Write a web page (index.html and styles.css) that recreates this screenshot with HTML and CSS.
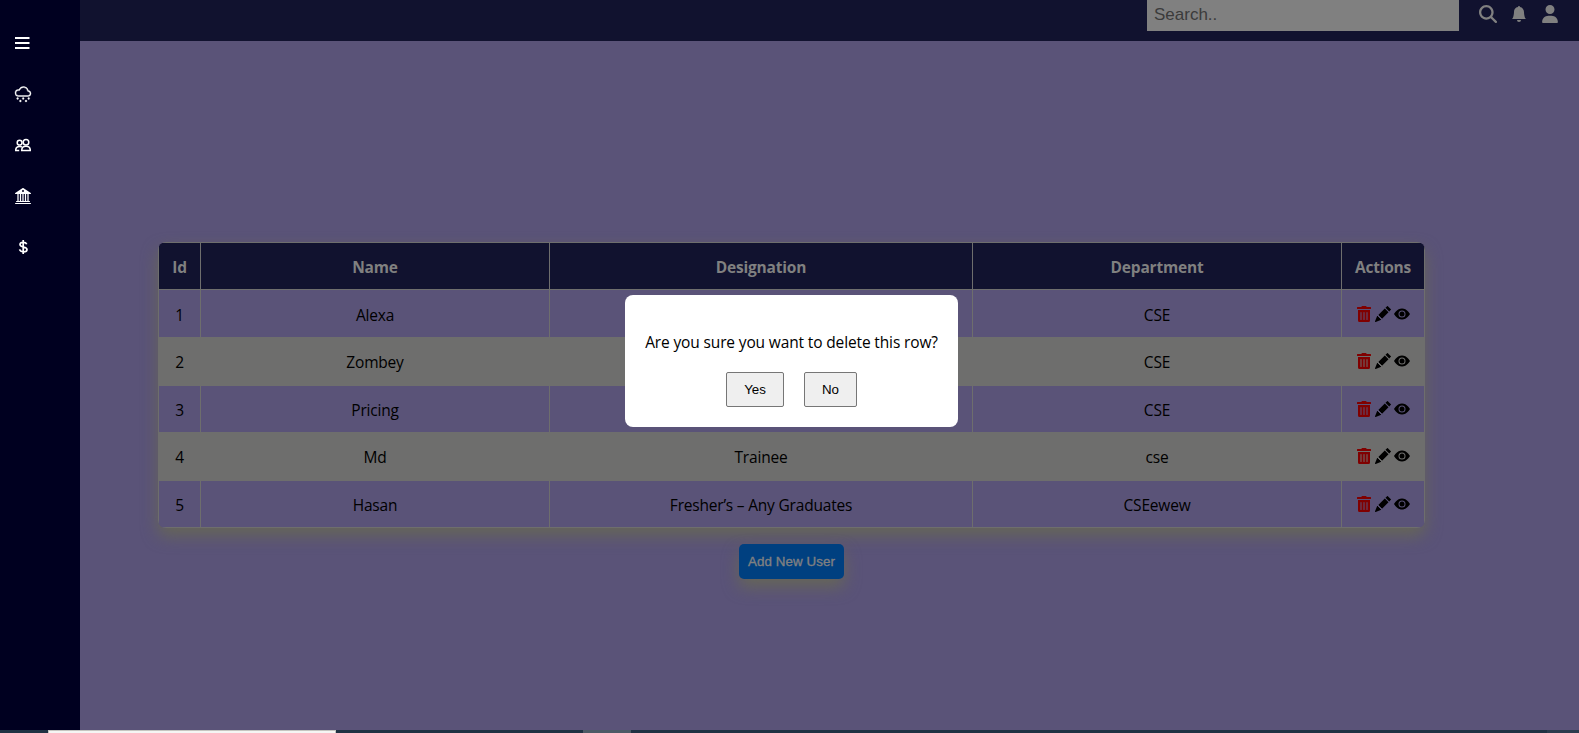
FILE: index.html
```html
<!DOCTYPE html>
<html lang="en">
<head>
<meta charset="utf-8">
<title>Users</title>
<link rel="stylesheet" href="styles.css">
</head>
<body>
<svg class="defs" xmlns="http://www.w3.org/2000/svg">
  <symbol id="trash" viewBox="0 0 448 512"><path d="M32 464a48 48 0 0 0 48 48h288a48 48 0 0 0 48-48V128H32zm272-256a16 16 0 0 1 32 0v224a16 16 0 0 1-32 0zm-96 0a16 16 0 0 1 32 0v224a16 16 0 0 1-32 0zm-96 0a16 16 0 0 1 32 0v224a16 16 0 0 1-32 0zM432 32H312l-9.4-18.7A24 24 0 0 0 281.1 0H166.8a23.72 23.72 0 0 0-21.4 13.3L136 32H16A16 16 0 0 0 0 48v32a16 16 0 0 0 16 16h416a16 16 0 0 0 16-16V48a16 16 0 0 0-16-16z"/></symbol>
  <symbol id="pencil" viewBox="0 0 16 16"><path d="M12.854.146a.5.5 0 0 0-.707 0L10.5 1.793 14.207 5.5l1.647-1.646a.5.5 0 0 0 0-.708l-3-3zm.646 6.061L9.793 2.5 3.293 9H3.5a.5.5 0 0 1 .5.5v.5h.5a.5.5 0 0 1 .5.5v.5h.5a.5.5 0 0 1 .5.5v.5h.5a.5.5 0 0 1 .5.5v.207l6.5-6.5zm-7.468 7.468A.5.5 0 0 1 6 13.5V13h-.5a.5.5 0 0 1-.5-.5V12h-.5a.5.5 0 0 1-.5-.5V11h-.5a.5.5 0 0 1-.5-.5V10h-.5a.499.499 0 0 1-.175-.032l-.179.178a.5.5 0 0 0-.11.168l-2 5a.5.5 0 0 0 .65.65l5-2a.5.5 0 0 0 .168-.11l.178-.178z"/></symbol>
  <symbol id="eye" viewBox="0 0 16 16"><path d="M10.5 8a2.5 2.5 0 1 1-5 0 2.5 2.5 0 0 1 5 0z"/><path d="M0 8s3-5.5 8-5.5S16 8 16 8s-3 5.5-8 5.5S0 8 0 8zm8 3.5a3.5 3.5 0 1 0 0-7 3.5 3.5 0 0 0 0 7z"/></symbol>
</svg>
<div class="app">
  <aside class="sidebar">
    <svg class="icon" viewBox="0 0 16 16"><path d="M0 2h14.5v2H0zM0 7h14.5v2H0zM0 12h14.5v2H0z"/></svg>
    <svg class="icon cloud" viewBox="0 0 16 16"><path d="M13.4 4.53A5 5 0 0 0 3.9 3.52 3.5 3.5 0 1 0 3.5 10.5H13a3 3 0 0 0 .4-5.97zM8.5 1.5a4 4 0 0 1 3.98 3.55.5.5 0 0 0 .5.45H13a2 2 0 0 1 0 4H3.5a2.5 2.5 0 1 1 .6-4.93.5.5 0 0 0 .6-.33A4 4 0 0 1 8.5 1.5z"/><circle cx="2.6" cy="12.5" r=".9"/><circle cx="8.2" cy="12.5" r=".9"/><circle cx="13.7" cy="12.5" r=".9"/><circle cx="5.4" cy="15" r=".9"/><circle cx="11" cy="15" r=".9"/></svg>
    <svg class="icon line" viewBox="0 0 16 16"><circle cx="4.6" cy="5.7" r="2.4"/><circle cx="11" cy="5.2" r="2.8"/><path d="M6.7 13.4c0-2.6 1.5-4.1 4.3-4.1s4.3 1.5 4.3 4.1zM7 9.9C6.3 9.6 5.5 9.5 4.6 9.5 2 9.5.7 11 .7 13.4h3.5"/></svg>
    <svg class="icon" viewBox="0 0 16 16"><path d="M8.277.084a.5.5 0 0 0-.554 0l-7.5 5A.5.5 0 0 0 .5 6h1.875v7H1.5a.5.5 0 0 0 0 1h13a.5.5 0 1 0 0-1h-.875V6H15.5a.5.5 0 0 0 .277-.916l-7.5-5zM12.375 6v7h-1.25V6h1.25zm-2.5 0v7h-1.25V6h1.25zm-2.5 0v7h-1.25V6h1.25zm-2.5 0v7h-1.25V6h1.25zM8 4a1 1 0 1 1 0-2 1 1 0 0 1 0 2zM.5 15a.5.5 0 0 0 0 1h15a.5.5 0 1 0 0-1H.5z"/></svg>
    <svg class="icon dollar" viewBox="0 0 16 16"><path d="M8.2 1v14M11.7 5.2C11.2 3.9 10 3.3 8.3 3.3c-2 0-3.3.9-3.3 2.3 0 3.4 7 1.4 7 4.8 0 1.5-1.5 2.4-3.6 2.4-2 0-3.4-.8-3.8-2.4"/></svg>
  </aside>
  <div class="content">
    <header class="topbar">
      <div class="search">Search..</div>
      <svg class="top-icon" viewBox="0 0 512 512"><path d="M416 208c0 45.9-14.9 88.3-40 122.7L502.6 457.4c12.5 12.5 12.5 32.8 0 45.3s-32.8 12.5-45.3 0L330.7 376c-34.4 25.2-76.8 40-122.7 40C93.1 416 0 322.9 0 208S93.1 0 208 0S416 93.1 416 208zM208 352a144 144 0 1 0 0-288 144 144 0 1 0 0 288z"/></svg>
      <svg class="top-icon bell" viewBox="0 0 16 16"><path d="M8 16a2 2 0 0 0 2-2H6a2 2 0 0 0 2 2zm.995-14.901a1 1 0 1 0-1.99 0A5.002 5.002 0 0 0 3 6c0 1.098-.5 6-2 7h14c-1.5-1-2-5.902-2-7 0-2.42-1.72-4.44-4.005-4.901z"/></svg>
      <svg class="top-icon user" viewBox="0 0 448 512"><path d="M224 256A128 128 0 1 0 224 0a128 128 0 1 0 0 256zm-45.7 48C79.8 304 0 383.8 0 482.3C0 498.7 13.3 512 29.7 512H418.3c16.4 0 29.7-13.3 29.7-29.7C448 383.8 368.2 304 269.7 304H178.3z"/></svg>
    </header>
    <main class="main">
      <div class="table-card">
        <table class="users">
          <colgroup><col class="c-id"><col class="c-name"><col class="c-desig"><col class="c-dept"><col class="c-act"></colgroup>
          <thead><tr><th>Id</th><th>Name</th><th>Designation</th><th>Department</th><th>Actions</th></tr></thead>
          <tbody>
            <tr><td>1</td><td>Alexa</td><td></td><td>CSE</td><td><div class="actions"><svg class="trash"><use href="#trash"/></svg><svg><use href="#pencil"/></svg><svg><use href="#eye"/></svg></div></td></tr>
            <tr><td>2</td><td>Zombey</td><td></td><td>CSE</td><td><div class="actions"><svg class="trash"><use href="#trash"/></svg><svg><use href="#pencil"/></svg><svg><use href="#eye"/></svg></div></td></tr>
            <tr><td>3</td><td>Pricing</td><td></td><td>CSE</td><td><div class="actions"><svg class="trash"><use href="#trash"/></svg><svg><use href="#pencil"/></svg><svg><use href="#eye"/></svg></div></td></tr>
            <tr><td>4</td><td>Md</td><td>Trainee</td><td>cse</td><td><div class="actions"><svg class="trash"><use href="#trash"/></svg><svg><use href="#pencil"/></svg><svg><use href="#eye"/></svg></div></td></tr>
            <tr><td>5</td><td>Hasan</td><td>Fresher’s – Any Graduates</td><td>CSEewew</td><td><div class="actions"><svg class="trash"><use href="#trash"/></svg><svg><use href="#pencil"/></svg><svg><use href="#eye"/></svg></div></td></tr>
          </tbody>
        </table>
      </div>
      <button class="add">Add New User</button>
    </main>
  </div>
</div>
<div class="modal">
  <p class="question">Are you sure you want to delete this row?</p>
  <div class="choices"><button class="choice yes">Yes</button><button class="choice no">No</button></div>
</div>
<div class="taskbar"><span class="active"></span><span class="hover"></span><span class="tail"></span></div>
</body>
</html>
```
FILE: styles.css
```css
* { box-sizing: border-box; }
body {
  margin: 0;
  height: 733px;
  overflow: hidden;
  background: #5a5378;
  font-family: "Open Sans", "Noto Sans", sans-serif;
  font-size: 15.5px;
  color: #000;
}
.defs { position: absolute; width: 0; height: 0; }
.app { display: flex; height: 730px; }
.sidebar {
  width: 80px;
  background: #000020;
  padding: 35px 0 0 15px;
  display: flex;
  flex-direction: column;
  gap: 35px;
}
.icon { width: 16px; height: 16px; fill: #fff; flex: none; }
.icon.cloud { stroke: #fff; stroke-width: .4; overflow: visible; }
.icon.line { fill: none; stroke: #fff; stroke-width: 1.5; }
.icon.dollar { fill: none; stroke: #fff; stroke-width: 1.7; }
.content { flex: 1; display: flex; flex-direction: column; }
.topbar {
  height: 41px;
  background: #11122f;
  display: flex;
  align-items: flex-start;
  justify-content: flex-end;
  padding-right: 21px;
}
.search {
  width: 312px;
  height: 31px;
  background: #808080;
  color: #3b3b3b;
  font: 17px/29px "Liberation Sans", Arial, sans-serif;
  padding-left: 7px;
  margin-right: 20px;
}
.top-icon { width: 18px; height: 18px; fill: #808080; margin: 5px 14px 0 0; }
.top-icon.bell { width: 16px; height: 16px; margin: 6px 15px 0 0; }
.top-icon.user { width: 16px; margin-right: 0; }
.main {
  flex: 1;
  display: flex;
  flex-direction: column;
  align-items: center;
  padding: 201px 80px 0 0;
}
.table-card {
  width: 1267px;
  margin-left: 4px;
  border-radius: 8px;
  overflow: hidden;
  box-shadow: 0 8px 16px #666658;
}
.users { width: 1267px; border-collapse: collapse; table-layout: fixed; background: #5a5378; letter-spacing: -.2px; }
.users th, .users td { border: 1px solid #6e6e6d; padding: 2px 0 0; text-align: center; height: 47.5px; line-height: 20px; }
.users th { height: 47px; background: #11122f; color: #808080; font-weight: 700; }
.users tbody tr:first-child td { height: 48px; }
.users tbody tr:nth-child(even) { background: #6e6e6d; }
.c-id { width: 42px; }
.c-name { width: 349px; }
.c-desig { width: 423px; }
.c-dept { width: 369px; }
.c-act { width: 83px; }
.actions { display: flex; justify-content: center; gap: 3px; padding-bottom: 2px; }
.actions svg { width: 16px; height: 16px; }
.actions .trash { width: 14px; height: 16px; fill: #800000; margin-right: 1px; }
.add {
  margin: 16px 0 0 4px;
  width: 105px;
  height: 35px;
  padding: 0;
  border: 0;
  border-radius: 5px;
  background: #004080;
  color: #808080;
  font: 13.33px "Liberation Sans", Arial, sans-serif;
  letter-spacing: .08px;
  -webkit-text-stroke: .35px #808080;
  box-shadow: 0 8px 16px #666658;
}
.modal {
  position: absolute;
  left: 625px;
  top: 295px;
  width: 333px;
  height: 132px;
  border-radius: 8px;
  background: #fff;
  padding: 36px 20px 20px;
  text-align: center;
}
.question { margin: 0; height: 41px; line-height: 23px; white-space: nowrap; letter-spacing: -.14px; }
.choices { display: flex; justify-content: center; gap: 20px; }
.choice {
  height: 35px;
  padding: 0;
  border: 1px solid #767676;
  border-radius: 2px;
  background: #efefef;
  font: 13.33px "Liberation Sans", Arial, sans-serif;
  color: #000;
}
.yes { width: 58px; }
.no { width: 53px; }
.taskbar { display: flex; height: 3px; background: #1f3243; }
.taskbar .active { margin-left: 48px; width: 288px; background: #f5f5f3; border: 1px solid #c5c5c0; border-bottom: 0; }
.taskbar .hover { margin-left: 247px; width: 48px; background: #4c5b66; }
.taskbar .tail { margin-left: auto; width: 32px; background: #2b3c4e; }
```
